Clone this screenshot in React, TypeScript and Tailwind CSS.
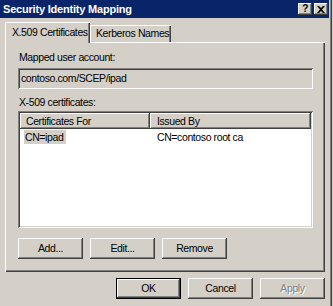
import React from "react";

const raised =
  "shadow-[inset_-1px_-1px_#404040,inset_1px_1px_#ffffff,inset_-2px_-2px_#808080,inset_2px_2px_#d4d0c8]";
const sunken =
  "shadow-[inset_1px_1px_#808080,inset_-1px_-1px_#ffffff,inset_2px_2px_#404040,inset_-2px_-2px_#d4d0c8]";

function Btn({ label, isDefault, disabled }: { label: string; isDefault?: boolean; disabled?: boolean }) {
  return (
    <div
      className={`w-[65px] h-[21px] shrink-0 flex items-center justify-center bg-[#d4d0c8] ${
        isDefault ? "border border-black" : ""
      } ${raised}`}
    >
      <span
        className={
          disabled ? "text-[#808080] [text-shadow:1px_1px_0_#ffffff]" : "text-black"
        }
      >
        {label}
      </span>
    </div>
  );
}

function CaptionBtn({ children }: { children: React.ReactNode }) {
  return (
    <div
      className={`w-[14px] h-[12px] bg-[#d4d0c8] flex items-center justify-center text-[10px] font-bold leading-none text-black ${raised}`}
    >
      {children}
    </div>
  );
}

export default function App() {
  return (
    <div className="w-[333px] h-[306px] bg-[#d4d0c8] flex overflow-hidden whitespace-nowrap text-[10.5px] leading-[13px] tracking-[-0.4px] text-black font-['Liberation_Sans',Arial,sans-serif]">
      <div className="w-[329px] flex flex-col">
        {/* title bar */}
        <div className="h-[18px] bg-[#0a246a] flex items-center pl-[3px] pr-[1px]">
          <span className="text-white font-bold text-[11px] tracking-[-0.2px]">Security Identity Mapping</span>
          <div className="ml-auto flex gap-[2px]">
            <CaptionBtn>?</CaptionBtn>
            <CaptionBtn>
              <svg width="8" height="7" viewBox="0 0 8 7">
                <path d="M0 0h2l2 2 2-2h2L5 3.5 8 7H6L4 5 2 7H0l3-3.5z" fill="#000" />
              </svg>
            </CaptionBtn>
          </div>
        </div>

        <div className="pl-[5px] pt-[4px]">
          {/* tabs */}
          <div className="flex items-end h-[21px] -mb-px relative z-10">
            <div className="w-[85px] h-[21px] shrink-0 bg-[#d4d0c8] pl-[7px] flex items-center shadow-[inset_1px_1px_#ffffff,inset_-1px_0_#404040,inset_-2px_0_#808080]">
              X.509 Certificates
            </div>
            <div className="w-[81px] h-[17px] shrink-0 mb-px pl-[6px] flex items-center shadow-[inset_1px_1px_#ffffff,inset_-1px_0_#404040,inset_-2px_0_#808080]">
              Kerberos Names
            </div>
          </div>

          {/* panel */}
          <div className="w-[320px] h-[230px] flex flex-col pl-[13px] pt-[9px] shadow-[inset_1px_1px_#ffffff,inset_-1px_-1px_#404040,inset_-2px_-2px_#808080]">
            <div className="pl-[1px]">Mapped user account:</div>
            <div className={`mt-[4px] w-[295px] h-[21px] flex items-center pl-[3px] ${sunken}`}>
              contoso.com/SCEP/ipad
            </div>
            <div className="mt-[7px] pl-[1px]">X-509 certificates:</div>
            <div className={`mt-[2px] w-[295px] h-[117px] bg-white p-[2px] ${sunken}`}>
              <div className="flex h-[16px]">
                <div className={`w-[130px] h-full bg-[#d4d0c8] pl-[6px] flex items-center ${raised}`}>
                  Certificates For
                </div>
                <div className={`w-[161px] h-full bg-[#d4d0c8] pl-[7px] flex items-center ${raised}`}>
                  Issued By
                </div>
              </div>
              <div className="flex h-[14px] mt-px">
                <div className="w-[130px] pl-[4px]">
                  <span className="inline-block h-[14px] bg-[#d4d0c8] pl-[1px] pr-[3px] leading-[14px]">
                    CN=ipad
                  </span>
                </div>
                <div className="pl-[7px] leading-[14px]">CN=contoso root ca</div>
              </div>
            </div>
            <div className="mt-[10px] flex gap-[7px]">
              <Btn label="Add..." />
              <Btn label="Edit..." />
              <Btn label="Remove" />
            </div>
          </div>

          {/* dialog buttons */}
          <div className="w-[320px] mt-[6px] flex justify-end gap-[7px]">
            <Btn label="OK" isDefault />
            <Btn label="Cancel" />
            <Btn label="Apply" disabled />
          </div>
        </div>
      </div>

      {/* right window frame */}
      <div className="w-px h-full bg-[#d4d0c8]" />
      <div className="w-px h-full bg-[#808080]" />
      <div className="w-px h-full bg-[#404040]" />
      <div className="w-px h-full bg-[#d4d0c8]" />
    </div>
  );
}
